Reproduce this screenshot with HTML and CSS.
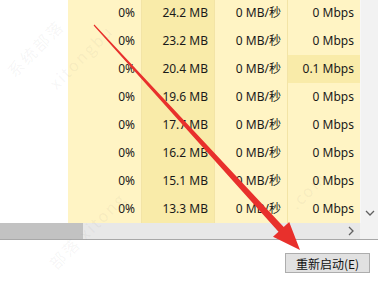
FILE: index.html
```html
<!DOCTYPE html>
<html>
<head>
<meta charset="utf-8">
<link rel="stylesheet" href="styles.css">
</head>
<body>
<div class="window">
  <div class="table-area">
    <div class="blank"></div>
    <div class="grid">
      <div class="col c-low">
        <div class="cell">0%</div><div class="cell">0%</div><div class="cell">0%</div><div class="cell">0%</div>
        <div class="cell">0%</div><div class="cell">0%</div><div class="cell">0%</div><div class="cell">0%</div>
      </div>
      <div class="col c-mid">
        <div class="cell">24.2 MB</div><div class="cell">23.2 MB</div><div class="cell">20.4 MB</div><div class="cell">19.6 MB</div>
        <div class="cell">17.7 MB</div><div class="cell">16.2 MB</div><div class="cell">15.1 MB</div><div class="cell">13.3 MB</div>
      </div>
      <div class="col c-low">
        <div class="cell">0 MB/秒</div><div class="cell">0 MB/秒</div><div class="cell">0 MB/秒</div><div class="cell">0 MB/秒</div>
        <div class="cell">0 MB/秒</div><div class="cell">0 MB/秒</div><div class="cell">0 MB/秒</div><div class="cell">0 MB/秒</div>
      </div>
      <div class="col c-low">
        <div class="cell">0 Mbps</div><div class="cell">0 Mbps</div><div class="cell hot">0.1 Mbps</div><div class="cell">0 Mbps</div>
        <div class="cell">0 Mbps</div><div class="cell">0 Mbps</div><div class="cell">0 Mbps</div><div class="cell">0 Mbps</div>
      </div>
    </div>
    <div class="vscroll">
      <svg class="arrow-down" width="10" height="6" viewBox="0 0 10 6"><path d="M1 1 L5 5 L9 1" fill="none" stroke="#606060" stroke-width="1.3"/></svg>
    </div>
  </div>
  <div class="hscroll">
    <div class="thumb"></div>
    <div class="track"></div>
    <svg class="arrow-right" width="6" height="10" viewBox="0 0 6 10"><path d="M1 1 L5 5 L1 9" fill="none" stroke="#606060" stroke-width="1.3"/></svg>
    <div class="corner"></div>
  </div>
  <div class="footer">
    <button class="btn">重新启动(E)</button>
  </div>

  <div class="watermark">
    <span class="wm w1">系统部落</span>
    <span class="wm w2">xitongbu</span>
    <span class="wm w3">部落 xitong</span>
    <span class="wm w4">.com</span>
  </div>

  <svg class="red-arrow" width="378" height="283" viewBox="0 0 378 283">
    <polygon points="94.4,24.6 283.7,226.9 289.2,221.9 300,250 273,236.7 278.5,231.7 93.6,25.4" fill="#e8302c"/>
  </svg>
</div>
</body>
</html>
```

FILE: styles.css
```css
* { box-sizing: border-box; }
html, body {
  margin: 0;
  padding: 0;
  background: #ffffff;
}
body {
  font-family: "Noto Sans", "Noto Sans CJK SC", sans-serif;
  font-size: 12px;
  color: #1a1a1a;
}
.window {
  position: relative;
  width: 378px;
  height: 283px;
  overflow: hidden;
  background: #ffffff;
}
.table-area {
  display: flex;
  height: 223px;
  overflow: hidden;
}
.blank {
  width: 68px;
  flex: none;
  background: #ffffff;
}
.grid {
  display: flex;
  margin-top: -1px;
}
.col {
  width: 73px;
  display: flex;
  flex-direction: column;
}
.c-low { background: #fff4c4; }
.c-mid { background: #f9eba9; }
.col + .col { border-left: 1px solid #f3e4a6; }
.cell {
  height: 28px;
  line-height: 28px;
  text-align: right;
  padding-right: 6px;
  white-space: nowrap;
}
.cell.hot { background: #f9eba9; }
.vscroll {
  width: 18px;
  flex: none;
  background: #f2f2f2;
  border-left: 1px solid #f7f7f7;
  display: flex;
  flex-direction: column;
  justify-content: flex-end;
  align-items: center;
  padding-bottom: 7px;
}
.hscroll {
  display: flex;
  align-items: center;
  height: 16px;
  background: #e8e8e8;
}
.thumb {
  width: 83px;
  height: 16px;
  background: #c2c2c2;
}
.track { flex: 1; }
.arrow-right { margin-right: 6px; }
.corner {
  width: 18px;
  height: 16px;
  background: #f2f2f2;
}
.footer {
  border-top: 1px solid #a8a8a8;
  height: 44px;
  display: flex;
  justify-content: flex-end;
  align-items: flex-start;
  padding: 13px 8px 0 0;
  background: #ffffff;
}
.btn {
  width: 85px;
  height: 20px;
  padding: 0;
  font-family: "Noto Sans CJK SC", "Noto Sans", sans-serif;
  font-size: 12px;
  color: #111;
  background: #e1e1e1;
  border: 1px solid #adadad;
  line-height: 17px;
}
.watermark {
  position: absolute;
  inset: 0;
  pointer-events: none;
}
.wm {
  position: absolute;
  font-family: "Noto Sans CJK SC", sans-serif;
  font-size: 16px;
  color: rgba(130, 130, 130, 0.08);
  transform: rotate(-45deg);
  transform-origin: left bottom;
  white-space: nowrap;
  letter-spacing: 2px;
}
.w1 { left: 18px; top: 58px; }
.w2 { left: 60px; top: 70px; }
.w3 { left: 60px; top: 250px; }
.w4 { left: 300px; top: 190px; }
.red-arrow {
  position: absolute;
  left: 0;
  top: 0;
}
```
